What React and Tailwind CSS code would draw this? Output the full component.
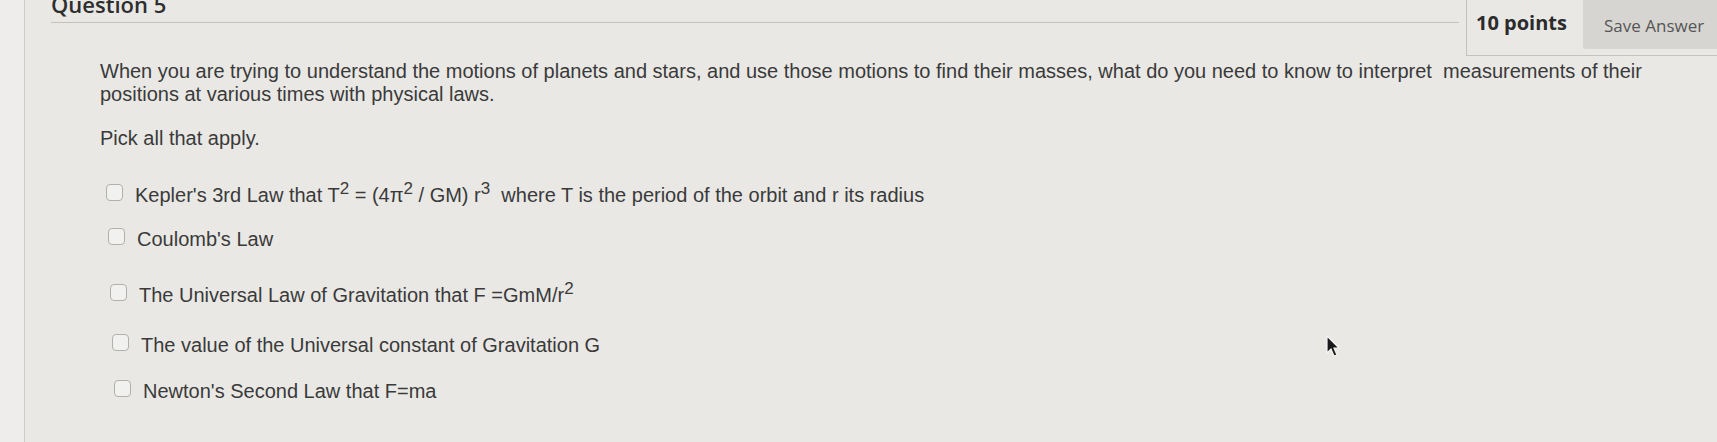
import React from "react";

const Sup = ({ children }) => <sup className="text-[17px] top-[-0.5em]">{children}</sup>;

const options = [
    {
        id: 1,
        gap: "mt-[32px]",
        label: (
            <>
                Kepler's 3rd Law that T<Sup>2</Sup> = (4π<Sup>2</Sup> / GM) r<Sup>3</Sup>&nbsp; where T is the period of the orbit and r its radius
            </>
        ),
    },
    { id: 2, gap: "mt-[18px]", label: "Coulomb's Law" },
    {
        id: 3,
        gap: "mt-[30px]",
        label: (
            <>
                The Universal Law of Gravitation that F =GmM/r<Sup>2</Sup>
            </>
        ),
    },
    { id: 4, gap: "mt-[24px]", label: "The value of the Universal constant of Gravitation G" },
    { id: 5, gap: "mt-[20px]", label: "Newton's Second Law that F=ma" },
];

const Cursor = () => (
    <svg className="absolute left-[1325px] top-[335px]" width="16" height="24" viewBox="0 0 16 24">
        <path d="M2 1 L2 18 L6 14 L9 21 L12 20 L9 13 L14 13 Z" fill="#1a1a1a" stroke="#f4f4f4" strokeWidth="1.2" />
    </svg>
);

const App = () => {
    return (
        <div className="relative w-[1717px] h-[442px] overflow-hidden flex bg-[#e9e8e5]">
            <div className="w-[25px] shrink-0 bg-[#eeedeb] border-r border-[#cfcdca]" />
            <div className="flex-1 flex flex-col">
                {/* header */}
                <div className="flex items-start pl-[26px]">
                    <div className="flex-1 h-[23px] border-b border-[#c3c2be]">
                        <h2 className="font-['Open_Sans',sans-serif] font-semibold text-[22px] leading-[22px] text-[#2e2e2e] -mt-[7px]">
                            Question 5
                        </h2>
                    </div>
                    <div className="h-[56px] flex items-start border-l border-b border-[#c3c2be] pl-[9px] ml-[7px]">
                        <span className="font-['Open_Sans',sans-serif] font-bold text-[20px] leading-[46px] text-[#2b2b2b]">
                            10 points
                        </span>
                        <button className="ml-[16px] h-[49px] w-[134px] bg-[#d6d5d2] rounded-bl-[3px] font-['Open_Sans',sans-serif] text-[17px] text-[#565656] text-left pl-[21px] pt-[2px]">
                            Save Answer
                        </button>
                    </div>
                </div>

                {/* body */}
                <div className="pl-[75px] pr-[40px] font-['Liberation_Sans',Arial,sans-serif] text-[20px] leading-[23px] text-[#3a3a3a]">
                    <p className="mt-[4px]">
                        When you are trying to understand the motions of planets and stars, and use those motions to find their masses, what do you need to know to interpret&nbsp; measurements of their positions at various times with physical laws.
                    </p>
                    <p className="mt-[21px]">Pick all that apply.</p>

                    <div className="flex flex-col">
                        {options.map((o, i) => (
                            <label key={o.id} className={`${o.gap} flex items-center gap-[12px]`} style={{ paddingLeft: 6 + i * 2 }}>
                                <span className="w-[17px] h-[17px] shrink-0 mb-[6px] rounded-[4px] border border-[#b1b0ad] bg-[#f1f1f0]" />
                                <span className="leading-[26px]">{o.label}</span>
                            </label>
                        ))}
                    </div>
                </div>
            </div>
            <Cursor />
        </div>
    );
};

export default App;
